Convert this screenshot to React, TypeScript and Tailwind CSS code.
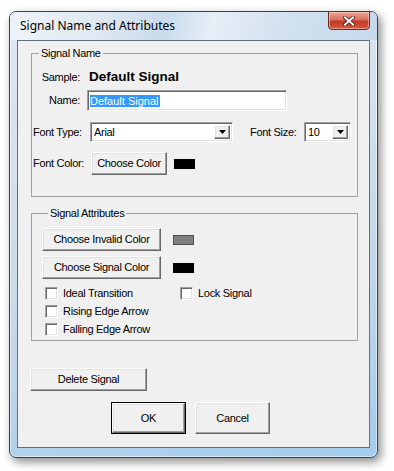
const raised =
  'border border-t-white border-l-white border-r-[#696969] border-b-[#696969] shadow-[inset_-1px_-1px_0_#a0a0a0,inset_1px_1px_0_#e3e3e3] bg-[#f0f0f0]';
const sunken =
  'border border-t-[#a0a0a0] border-l-[#a0a0a0] border-r-white border-b-white shadow-[inset_1px_1px_0_#696969,inset_-1px_-1px_0_#e3e3e3] bg-white';

const Button = ({ label, className = '' }: { label: string; className?: string }) => (
  <button className={`${raised} flex items-center justify-center text-[11px] tracking-[-0.3px] text-black ${className}`}>
    {label}
  </button>
);

const Swatch = ({ color, className = '' }: { color: string; className?: string }) => (
  <div className={`h-[10px] w-[21px] ${color} ${className}`} />
);

const Arrow = () => (
  <div className={`${raised} flex h-full w-[16px] items-center justify-center`}>
    <svg width="7" height="4" viewBox="0 0 7 4">
      <polygon points="0,0 7,0 3.5,4" fill="#000" />
    </svg>
  </div>
);

const Select = ({ value, className = '' }: { value: string; className?: string }) => (
  <div className={`${sunken} flex h-[20px] items-stretch p-[2px] ${className}`}>
    <span className="flex-1 pl-[1px] text-[11px] leading-[15px]">{value}</span>
    <Arrow />
  </div>
);

const Check = ({ label }: { label: string }) => (
  <div className="flex items-center gap-[5px]">
    <div className={`${sunken} h-[13px] w-[13px]`} />
    <span className="text-[11px] tracking-[-0.3px]">{label}</span>
  </div>
);

const Group = ({ title, className = '', children }: { title: string; className?: string; children: React.ReactNode }) => (
  <fieldset className={`ml-[13px] w-[327px] border border-[#a0a0a0] ${className}`}>
    <legend className="ml-[6px] px-[2px] text-[11px] leading-[13px] tracking-[-0.3px]">{title}</legend>
    {children}
  </fieldset>
);

export default function App() {
  return (
    <div className="h-[471px] w-[394px] bg-white pl-[9px] pt-[11px] font-['Liberation_Sans',Arial,sans-serif] text-black">
      <div className="flex h-[447px] w-[369px] flex-col rounded-[7px] border border-[#34414f] bg-[linear-gradient(165deg,#dfe8f1_0%,#d3dfeb_35%,#c2d6e9_65%,#a3cced_100%)] shadow-[3px_4px_10px_rgba(0,0,0,0.45),inset_0_0_0_1px_rgba(255,255,255,0.55)]">
        {/* title bar */}
        <div className="flex h-[28px] items-start justify-between rounded-t-[6px] bg-[linear-gradient(100deg,#eef3f8_0%,#dfe8f1_25%,#c9dbec_42%,#e6eef6_55%,#d2e1ef_75%,#c6d9ec_100%)]">
          <span className="pl-[10px] font-['Noto_Sans',sans-serif] text-[12px] leading-[28px] text-black">
            Signal Name and Attributes
          </span>
          <div className="-mt-px mr-[7px] flex h-[19px] w-[42px] items-center justify-center rounded-b-[4px] border border-[#6b2a24] bg-[linear-gradient(180deg,#eaa89b_0%,#d8705f_45%,#c23a27_55%,#d35a3e_100%)] shadow-[inset_0_0_0_1px_rgba(255,220,210,0.5)]">
            <svg width="12" height="10" viewBox="0 0 12 10">
              <path d="M2 1.5 L10 8.5 M10 1.5 L2 8.5" stroke="#4a1a14" strokeWidth="3.6" strokeLinecap="square" />
              <path d="M2 1.5 L10 8.5 M10 1.5 L2 8.5" stroke="#fff" strokeWidth="2" strokeLinecap="square" />
            </svg>
          </div>
        </div>

        {/* client */}
        <div className="flex-1 px-[7px] pb-[9px]">
          <div className="flex h-full flex-col border border-[#627181] bg-[#f0f0f0] text-[11px] tracking-[-0.3px]">
            <Group title="Signal Name" className="mt-[6px] pb-[21px] pl-[1px] pt-[6px]">
              <div className="flex h-[22px] items-center">
                <span className="w-[47px] text-right">Sample:</span>
                <span className="ml-[9px] text-[13.5px] font-bold tracking-normal">Default Signal</span>
              </div>
              <div className="mt-[2px] flex h-[21px] items-center">
                <span className="w-[47px] text-right">Name:</span>
                <div className={`${sunken} ml-[7px] flex h-[21px] w-[200px] items-center pl-[2px]`}>
                  <span className="bg-[#3399ff] pr-[1px] leading-[12px] tracking-normal text-white">Default Signal</span>
                </div>
              </div>
              <div className="mt-[11px] flex h-[20px] items-center">
                <span className="w-[57px]">Font Type:</span>
                <Select value="Arial" className="w-[143px]" />
                <span className="ml-[17px] w-[54px]">Font Size:</span>
                <Select value="10" className="w-[47px]" />
              </div>
              <div className="mt-[10px] flex h-[23px] items-center">
                <span className="w-[58px]">Font Color:</span>
                <Button label="Choose Color" className="h-[23px] w-[76px]" />
                <Swatch color="bg-black" className="ml-[7px] w-[20px]" />
              </div>
            </Group>

            <Group title="Signal Attributes" className="mt-[10px] pb-[2px] pl-[10px] pt-[8px]">
              <div className="flex h-[23px] items-center">
                <Button label="Choose Invalid Color" className="h-[23px] w-[119px]" />
                <Swatch color="bg-[#808080] border border-[#505050]" className="ml-[12px]" />
              </div>
              <div className="mt-[5px] flex h-[23px] items-center">
                <Button label="Choose Signal Color" className="h-[23px] w-[119px]" />
                <Swatch color="bg-black" className="ml-[12px]" />
              </div>
              <div className="mt-[5px] grid grid-cols-[135px_1fr] pl-[3px]">
                <div className="flex h-[18px] items-center">
                  <Check label="Ideal Transition" />
                </div>
                <div className="flex h-[18px] items-center">
                  <Check label="Lock Signal" />
                </div>
                <div className="col-span-2 flex h-[18px] items-center">
                  <Check label="Rising Edge Arrow" />
                </div>
                <div className="col-span-2 flex h-[18px] items-center">
                  <Check label="Falling Edge Arrow" />
                </div>
              </div>
            </Group>

            <Button label="Delete Signal" className="ml-[12px] mt-[27px] h-[23px] w-[117px]" />

            <div className="ml-[93px] mt-[11px] flex gap-[9px]">
              <div className="h-[32px] w-[75px] border border-black">
                <Button label="OK" className="h-full w-full" />
              </div>
              <Button label="Cancel" className="h-[32px] w-[75px]" />
            </div>
          </div>
        </div>
      </div>
    </div>
  );
}
